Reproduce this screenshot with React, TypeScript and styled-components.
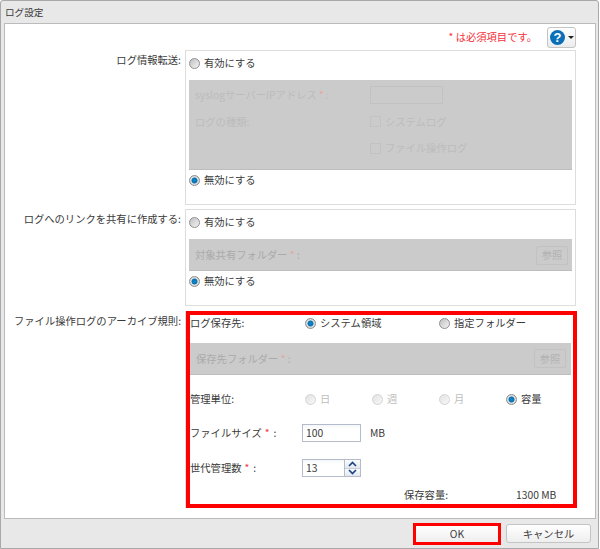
import styled, { createGlobalStyle } from 'styled-components';

const GlobalStyle = createGlobalStyle`
  html, body {
    margin: 0;
    padding: 0;
    background: #fff;
  }
  body {
    font-family: "Noto Sans CJK JP", "Noto Sans", sans-serif;
    font-size: 10.3px;
    line-height: 14px;
    color: #3a3a3a;
  }
`;

const App = () => {
  return (
    <Window>
      <GlobalStyle />
      <TitleBar>ログ設定</TitleBar>
      <Panel>
        <RequiredRow>
          <RequiredNote>* は必須項目です。</RequiredNote>
          <HelpButton>
            <HelpDot>?</HelpDot>
            <Caret />
          </HelpButton>
        </RequiredRow>

        <FormRow $gap={4}>
          <Label>ログ情報転送:</Label>
          <Section>
            <Option>
              <Radio />
              有効にする
            </Option>
            <GrayPanel $height={90}>
              <GrayRow>
                <GrayLabel>
                  syslogサーバーIPアドレス <PaleStar>*</PaleStar> :
                </GrayLabel>
                <GrayInput />
              </GrayRow>
              <GrayRow>
                <GrayLabel>ログの種類:</GrayLabel>
                <GrayCheck />
                <GrayText>システムログ</GrayText>
              </GrayRow>
              <GrayRow>
                <GrayLabel />
                <GrayCheck />
                <GrayText>ファイル操作ログ</GrayText>
              </GrayRow>
            </GrayPanel>
            <Option>
              <Radio $checked />
              無効にする
            </Option>
          </Section>
        </FormRow>

        <FormRow $gap={5}>
          <Label>ログへのリンクを共有に作成する:</Label>
          <Section>
            <Option>
              <Radio />
              有効にする
            </Option>
            <GrayPanel $height={32}>
              <FolderRow>
                <FolderText>
                  対象共有フォルダー <PaleStar>*</PaleStar> :
                </FolderText>
                <GrayButton>参照</GrayButton>
              </FolderRow>
            </GrayPanel>
            <Option>
              <Radio $checked />
              無効にする
            </Option>
          </Section>
        </FormRow>

        <FormRow>
          <Label>ファイル操作ログのアーカイブ規則:</Label>
          <RedSection>
            <SettingRow $height={16}>
              <SettingLabel>ログ保存先:</SettingLabel>
              <WideOption>
                <Radio $checked />
                システム領域
              </WideOption>
              <WideOption>
                <Radio />
                指定フォルダー
              </WideOption>
            </SettingRow>
            <FolderPanel>
              <FolderText>
                保存先フォルダー <PaleStar>*</PaleStar> :
              </FolderText>
              <GrayButton>参照</GrayButton>
            </FolderPanel>
            <SettingRow $top={15}>
              <SettingLabel>管理単位:</SettingLabel>
              <NarrowOption $disabled>
                <Radio $disabled />日
              </NarrowOption>
              <NarrowOption $disabled>
                <Radio $disabled />週
              </NarrowOption>
              <NarrowOption $disabled>
                <Radio $disabled />月
              </NarrowOption>
              <NarrowOption>
                <Radio $checked />
                容量
              </NarrowOption>
            </SettingRow>
            <SettingRow $top={16}>
              <SettingLabel>
                ファイルサイズ<Star>*</Star>:
              </SettingLabel>
              <TextBox>100</TextBox>
              <Unit>MB</Unit>
            </SettingRow>
            <SettingRow $top={17}>
              <SettingLabel>
                世代管理数<Star>*</Star>:
              </SettingLabel>
              <TextBox>
                13
                <Spinner>
                  <SpinButton>
                    <svg width="9" height="6" viewBox="0 0 9 6">
                      <path d="M1 5 L4.5 1.5 L8 5" fill="none" stroke="#1c4587" strokeWidth="1.7" />
                    </svg>
                  </SpinButton>
                  <SpinButton>
                    <svg width="9" height="6" viewBox="0 0 9 6">
                      <path d="M1 1 L4.5 4.5 L8 1" fill="none" stroke="#1c4587" strokeWidth="1.7" />
                    </svg>
                  </SpinButton>
                </Spinner>
              </TextBox>
            </SettingRow>
            <CapacityRow>
              <CapacityLabel>保存容量:</CapacityLabel>
              1300 MB
            </CapacityRow>
          </RedSection>
        </FormRow>
      </Panel>
      <Footer>
        <OkOutline>
          <OkButton>OK</OkButton>
        </OkOutline>
        <CancelButton>キャンセル</CancelButton>
      </Footer>
    </Window>
  );
};

const Window = styled.div`
  box-sizing: border-box;
  width: 599px;
  height: 549px;
  display: flex;
  flex-direction: column;
  background: #e8e8e8;
  border: 1px solid #a8a8a8;
  border-radius: 3px 3px 0 0;
`;

const TitleBar = styled.div`
  height: 22px;
  padding-left: 4px;
  display: flex;
  align-items: center;
  font-size: 9.6px;
`;

const Panel = styled.div`
  box-sizing: border-box;
  height: 496px;
  margin: 0 2px 0 3px;
  background: #fff;
  border: 1px solid #bbb;
`;

const RequiredRow = styled.div`
  height: 26px;
  padding-right: 19px;
  display: flex;
  align-items: center;
  justify-content: flex-end;
`;

const RequiredNote = styled.span`
  margin-right: 10px;
  color: #f5313a;
`;

const HelpButton = styled.div`
  box-sizing: border-box;
  width: 29px;
  height: 21px;
  display: flex;
  align-items: center;
  gap: 3px;
  padding-left: 2px;
  background: linear-gradient(#fff, #ececec);
  border: 1px solid #c4c4c4;
  border-radius: 3px;
`;

const HelpDot = styled.span`
  width: 15px;
  height: 15px;
  border-radius: 50%;
  background: #0a6fb8;
  color: #fff;
  font-family: "Liberation Sans", sans-serif;
  font-size: 13px;
  font-weight: bold;
  line-height: 15px;
  text-align: center;
`;

const Caret = styled.span`
  width: 0;
  height: 0;
  border-left: 3px solid transparent;
  border-right: 3px solid transparent;
  border-top: 3px solid #222;
`;

const FormRow = styled.div<{ $gap?: number }>`
  display: flex;
  gap: 4px;
  margin-bottom: ${({ $gap = 0 }) => $gap}px;
`;

const Label = styled.div`
  box-sizing: border-box;
  width: 176px;
  padding: 3px 0 0 0;
  display: flex;
  justify-content: flex-end;
  white-space: nowrap;
`;

const Section = styled.div`
  box-sizing: border-box;
  width: 391px;
  padding: 3px 3px 15px;
  display: flex;
  flex-direction: column;
  border: 1px solid #ddd;
`;

const RedSection = styled.div`
  box-sizing: border-box;
  width: 391px;
  height: 197px;
  margin-left: 1px;
  border: 4px solid #f00;
  box-shadow: -1px 0 0 #ddd;
`;

const Option = styled.label`
  height: 18px;
  display: flex;
  align-items: center;
  gap: 4px;
`;

const Radio = styled.span<{ $checked?: boolean; $disabled?: boolean }>`
  box-sizing: border-box;
  flex: none;
  width: 11px;
  height: 11px;
  border-radius: 50%;
  border: 1px solid ${({ $disabled }) => ($disabled ? '#d4d4d4' : '#8f8f8f')};
  background: ${({ $checked, $disabled }) =>
    $checked
      ? 'radial-gradient(circle, #0a8ccf 0, #0a6fb0 2.6px, #e8e8e8 3.4px, #c4c4c4 5px)'
      : $disabled
        ? 'linear-gradient(135deg, #e2e2e2, #f8f8f8)'
        : 'linear-gradient(135deg, #c0c0c0, #f4f4f4)'};
`;

const GrayPanel = styled.div<{ $height: number }>`
  box-sizing: border-box;
  height: ${({ $height }) => $height}px;
  margin: 8px 0 1px;
  padding: 6px 6px 0;
  display: flex;
  flex-direction: column;
  gap: 8.5px;
  background: #cbcbcb;
  border-bottom: 1px solid #bdbdbd;
`;

const GrayRow = styled.div`
  height: 18px;
  display: flex;
  align-items: center;
  color: #bcbcbc;
`;

const GrayLabel = styled.div`
  width: 175px;
  white-space: nowrap;
`;

const GrayInput = styled.div`
  box-sizing: border-box;
  width: 73px;
  height: 18px;
  border: 1px solid #c2c2c2;
`;

const GrayCheck = styled.div`
  box-sizing: border-box;
  width: 11px;
  height: 11px;
  margin-right: 4px;
  border: 1px solid #c2c2c2;
`;

const GrayText = styled.span`
  color: #bcbcbc;
  white-space: nowrap;
`;

const FolderText = styled.span`
  color: #aaa;
  white-space: nowrap;
`;

const PaleStar = styled.span`
  color: #e6a4a4;
`;

const Star = styled.span`
  margin: 0 4px 0 3px;
  color: #f5313a;
`;

const FolderRow = styled.div`
  display: flex;
  align-items: center;
  justify-content: space-between;
  height: 20px;
  margin-right: -2px;
`;

const GrayButton = styled.div`
  box-sizing: border-box;
  width: 32px;
  height: 19px;
  display: flex;
  align-items: center;
  justify-content: center;
  border: 1px solid #c2c2c2;
  border-radius: 2px;
  color: #b2b2b2;
`;

const FolderPanel = styled.div`
  box-sizing: border-box;
  width: 381px;
  height: 32px;
  margin-top: 12px;
  padding: 0 5px 0 6px;
  display: flex;
  align-items: center;
  justify-content: space-between;
  background: #cbcbcb;
  border-bottom: 1px solid #bdbdbd;
`;

const SettingRow = styled.div<{ $top?: number; $height?: number }>`
  height: ${({ $height = 18 }) => $height}px;
  margin-top: ${({ $top = 0 }) => $top}px;
  display: flex;
  align-items: center;
`;

const SettingLabel = styled.div`
  width: 112px;
  flex: none;
  white-space: nowrap;
`;

const WideOption = styled.label`
  width: 134px;
  padding-left: 3px;
  box-sizing: border-box;
  display: flex;
  align-items: center;
  gap: 4px;
`;

const NarrowOption = styled.label<{ $disabled?: boolean }>`
  width: 67px;
  padding-left: 3px;
  box-sizing: border-box;
  display: flex;
  align-items: center;
  gap: 4px;
  color: ${({ $disabled }) => ($disabled ? '#bdbdbd' : '#3a3a3a')};
`;

const TextBox = styled.div`
  box-sizing: border-box;
  position: relative;
  width: 59px;
  height: 18px;
  padding-left: 3px;
  display: flex;
  align-items: center;
  border: 1px solid #b4bccb;
  background: linear-gradient(#f4f6f8, #fff 4px);
`;

const Spinner = styled.div`
  position: absolute;
  top: 0;
  right: 0;
  bottom: 0;
  width: 15px;
  display: flex;
  flex-direction: column;
  border-left: 1px solid #b4bccb;
`;

const SpinButton = styled.div`
  flex: 1;
  display: flex;
  align-items: center;
  justify-content: center;
  background: linear-gradient(#fafbfc, #e4e8ee);
  & + & {
    border-top: 1px solid #c8ced8;
  }
`;

const Unit = styled.span`
  margin-left: 9px;
`;

const CapacityRow = styled.div`
  height: 18px;
  margin-top: 9px;
  padding-left: 214px;
  display: flex;
  align-items: center;
`;

const CapacityLabel = styled.span`
  width: 112px;
`;

const Footer = styled.div`
  flex: 1;
  display: flex;
  align-items: center;
  justify-content: flex-end;
  gap: 5px;
  padding-right: 7px;
`;

const OkOutline = styled.div`
  box-sizing: border-box;
  width: 88px;
  height: 22px;
  border: 3px solid #f00;
`;

const OkButton = styled.div`
  height: 100%;
  display: flex;
  align-items: center;
  justify-content: center;
  background: linear-gradient(#fff, #eee);
`;

const CancelButton = styled.div`
  box-sizing: border-box;
  width: 85px;
  height: 19px;
  display: flex;
  align-items: center;
  justify-content: center;
  background: linear-gradient(#fff, #eee);
  border: 1px solid #c4c4c4;
  border-radius: 3px;
`;

export default App;
